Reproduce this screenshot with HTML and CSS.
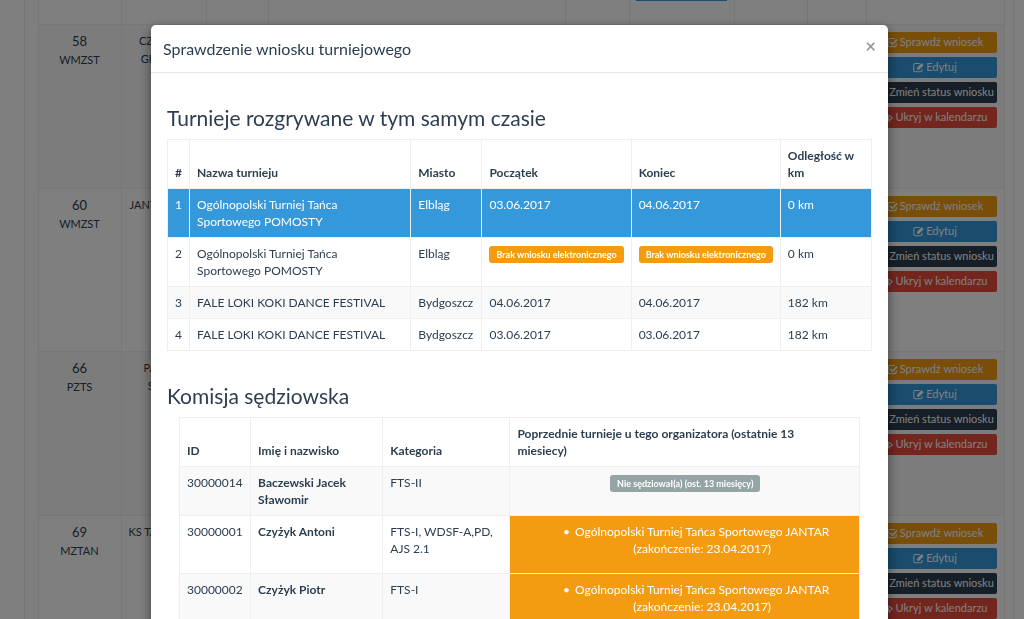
FILE: index.html
```html
<!DOCTYPE html>
<html lang="pl">
<head>
<meta charset="utf-8">
<title>Sprawdzenie wniosku turniejowego</title>
<link rel="stylesheet" href="styles.css">
</head>
<body>
<svg class="sprite" aria-hidden="true">
  <symbol id="check" viewBox="0 0 14 14"><path d="M10 2H3.2A1.7 1.7 0 0 0 1.500 3.700V10.500A1.700 1.700 0 0 0 3.200 12.200H10A1.700 1.700 0 0 0 11.700 10.500V8" fill="none" stroke="currentColor" stroke-width="1.400"/><path d="M4 6.200L7 9.200L12.800 3.200" fill="none" stroke="currentColor" stroke-width="2.200"/></symbol>
  <symbol id="edit" viewBox="0 0 14 14"><path d="M8.500 2H3A2 2 0 0 0 1 4V10.500A2 2 0 0 0 3 12.500H9.500A2 2 0 0 0 11.500 10.500V9" fill="none" stroke="currentColor" stroke-width="1.300"/><path d="M5.200 9.800V7.200L11 1.400L13.600 4L7.800 9.800Z" fill="currentColor"/></symbol>
  <symbol id="cog" viewBox="0 0 14 14"><circle cx="7" cy="7" r="4" fill="none" stroke="currentColor" stroke-width="2.500"/></symbol>
  <symbol id="hide" viewBox="0 0 14 14"><path d="M0.800 7.500Q7 0 13.200 7.500Q7 14 0.800 7.500Z" fill="none" stroke="currentColor" stroke-width="1.300"/><circle cx="7" cy="7" r="2.200" fill="currentColor"/><path d="M4 2L10 12.500" stroke="currentColor" stroke-width="1.300"/></symbol>
</svg>

<main class="panel">
  <table class="requests">
    <colgroup><col class="q-id"><col class="q-club"><col class="q-a"><col class="q-b"><col class="q-c"><col class="q-d"><col class="q-e"><col class="q-f"><col class="q-actions"></colgroup>
    <tbody>
      <tr class="previous"><td></td><td></td><td></td><td></td><td></td><td class="status"><span class="status-bar"></span></td><td></td><td></td><td></td></tr>
      <tr>
        <td><span class="number">58</span><br>WMZST</td><td>CZAPLE T<br>GRANDE</td><td></td><td></td><td></td><td></td><td></td><td></td>
        <td><div class="actions">
          <button class="btn warning"><svg><use href="#check"/></svg>Sprawdź wniosek</button>
          <button class="btn info"><svg><use href="#edit"/></svg>Edytuj</button>
          <button class="btn dark"><svg><use href="#cog"/></svg>Zmień status wniosku</button>
          <button class="btn danger"><svg><use href="#hide"/></svg>Ukryj w kalendarzu</button>
        </div></td>
      </tr>
      <tr>
        <td><span class="number">60</span><br>WMZST</td><td>JANTAR ELBL</td><td></td><td></td><td></td><td></td><td></td><td></td>
        <td><div class="actions">
          <button class="btn warning"><svg><use href="#check"/></svg>Sprawdź wniosek</button>
          <button class="btn info"><svg><use href="#edit"/></svg>Edytuj</button>
          <button class="btn dark"><svg><use href="#cog"/></svg>Zmień status wniosku</button>
          <button class="btn danger"><svg><use href="#hide"/></svg>Ukryj w kalendarzu</button>
        </div></td>
      </tr>
      <tr>
        <td><span class="number">66</span><br>PZTS</td><td>PASJA T<br>STEPS</td><td></td><td></td><td></td><td></td><td></td><td></td>
        <td><div class="actions">
          <button class="btn warning"><svg><use href="#check"/></svg>Sprawdź wniosek</button>
          <button class="btn info"><svg><use href="#edit"/></svg>Edytuj</button>
          <button class="btn dark"><svg><use href="#cog"/></svg>Zmień status wniosku</button>
          <button class="btn danger"><svg><use href="#hide"/></svg>Ukryj w kalendarzu</button>
        </div></td>
      </tr>
      <tr>
        <td><span class="number">69</span><br>MZTAN</td><td>KS TANIEC TK</td><td></td><td></td><td></td><td></td><td></td><td></td>
        <td><div class="actions">
          <button class="btn warning"><svg><use href="#check"/></svg>Sprawdź wniosek</button>
          <button class="btn info"><svg><use href="#edit"/></svg>Edytuj</button>
          <button class="btn dark"><svg><use href="#cog"/></svg>Zmień status wniosku</button>
          <button class="btn danger"><svg><use href="#hide"/></svg>Ukryj w kalendarzu</button>
        </div></td>
      </tr>
    </tbody>
  </table>
</main>

<div class="backdrop">
  <section class="modal" role="dialog" aria-labelledby="dialog-title">
    <header class="modal-header">
      <h1 id="dialog-title">Sprawdzenie wniosku turniejowego</h1>
      <button class="close" aria-label="Zamknij">×</button>
    </header>
    <div class="modal-body">
      <h2>Turnieje rozgrywane w tym samym czasie</h2>
      <table class="grid">
        <colgroup><col class="t-no"><col class="t-name"><col class="t-city"><col class="t-date"><col class="t-date"><col class="t-km"></colgroup>
        <thead><tr><th>#</th><th>Nazwa turnieju</th><th>Miasto</th><th>Początek</th><th>Koniec</th><th>Odległość w km</th></tr></thead>
        <tbody>
          <tr class="current"><td>1</td><td>Ogólnopolski Turniej Tańca<br>Sportowego POMOSTY</td><td>Elbląg</td><td>03.06.2017</td><td>04.06.2017</td><td>0 km</td></tr>
          <tr><td>2</td><td>Ogólnopolski Turniej Tańca<br>Sportowego POMOSTY</td><td>Elbląg</td><td><span class="label warning">Brak wniosku elektronicznego</span></td><td><span class="label warning">Brak wniosku elektronicznego</span></td><td>0 km</td></tr>
          <tr><td>3</td><td>FALE LOKI KOKI DANCE FESTIVAL</td><td>Bydgoszcz</td><td>04.06.2017</td><td>04.06.2017</td><td>182 km</td></tr>
          <tr><td>4</td><td>FALE LOKI KOKI DANCE FESTIVAL</td><td>Bydgoszcz</td><td>03.06.2017</td><td>03.06.2017</td><td>182 km</td></tr>
        </tbody>
      </table>

      <h2>Komisja sędziowska</h2>
      <div class="inset">
        <table class="grid">
          <colgroup><col class="j-id"><col class="j-name"><col class="j-cat"><col class="j-prev"></colgroup>
          <thead><tr><th>ID</th><th>Imię i nazwisko</th><th>Kategoria</th><th>Poprzednie turnieje u tego organizatora (ostatnie 13<br>miesiecy)</th></tr></thead>
          <tbody>
            <tr><td>30000014</td><td><strong>Baczewski Jacek<br>Sławomir</strong></td><td>FTS-II</td><td class="center"><span class="label muted">Nie sędziował(a) (ost. 13 miesięcy)</span></td></tr>
            <tr><td>30000001</td><td><strong>Czyżyk Antoni</strong></td><td>FTS-I, WDSF-A,PD,<br>AJS 2.1</td><td class="center warning"><ul><li><span>Ogólnopolski Turniej Tańca Sportowego JANTAR<br>(zakończenie: 23.04.2017)</span></li></ul></td></tr>
            <tr><td>30000002</td><td><strong>Czyżyk Piotr</strong></td><td>FTS-I</td><td class="center warning"><ul><li><span>Ogólnopolski Turniej Tańca Sportowego JANTAR<br>(zakończenie: 23.04.2017)</span></li></ul></td></tr>
          </tbody>
        </table>
      </div>
    </div>
  </section>
</div>
</body>
</html>
```
FILE: styles.css
```css
* { box-sizing: border-box; }
body {
  margin: 0;
  height: 100vh;
  overflow: hidden;
  background: #fff;
  color: #2c3e50;
  font: 12px/18px Lato, "Open Sans", sans-serif;
}
.sprite { display: none; }
table { width: 100%; border-collapse: collapse; table-layout: fixed; }

.panel {
  height: 100%;
  overflow: hidden;
  margin: 0 10px 0 24px;
  padding: 0 10px 0 13px;
  border: solid #ecf0f1;
  border-width: 0 1px;
}
.requests td {
  height: 163px;
  padding: 7px 7px 0 6px;
  border: 1px solid #ecf0f1;
  font-size: 11px;
  text-align: center;
  vertical-align: top;
}
.number { font-size: 13px; }
.requests tr:nth-child(even) { background: #f9f9f9; }
.requests tr:nth-child(even) td { height: 164px; }
.requests tr.previous td { height: 24px; padding-top: 0; border-top: 0; }
.status-bar { display: block; height: 1px; background: #3498db; }
.q-id { width: 83px; }
.q-club { width: 85px; }
.q-a { width: 62px; }
.q-b { width: 297px; }
.q-c { width: 64px; }
.q-d { width: 105px; }
.q-e { width: 73px; }
.q-f { width: 59px; }
.q-actions { width: 138px; }

.actions { display: grid; gap: 4px; }
.btn {
  display: flex;
  align-items: center;
  justify-content: center;
  gap: 2px;
  height: 21px;
  padding: 0;
  border: 0;
  border-radius: 2px;
  color: #fff;
  font: 11px/18px Lato, sans-serif;
  white-space: nowrap;
}
.btn svg { width: 11px; height: 11px; flex: none; }
.warning { background: #f39c12; color: #fff; }
.info { background: #3498db; }
.dark { background: #2c3e50; }
.danger { background: #e74c3c; }
.muted { background: #95a5a6; }

.backdrop {
  position: fixed;
  inset: 0;
  overflow: hidden;
  padding: 25px 0 0 15px;
  background: rgba(0, 0, 0, 0.5);
}
.modal {
  max-width: 737px;
  margin: 0 auto;
  background: #fff;
  border-radius: 5px;
  box-shadow: 0 4px 12px rgba(0, 0, 0, 0.5);
}
.modal-header {
  display: flex;
  align-items: center;
  justify-content: space-between;
  padding: 12px;
  border-bottom: 1px solid #e5e5e5;
}
h1 { margin: 0; font-size: 16px; line-height: 23px; font-weight: 400; }
.close {
  align-self: flex-start;
  padding: 0;
  border: 0;
  background: none;
  color: #999;
  font: 700 18px/18px Lato, sans-serif;
}
.modal-body { padding: 33px 16px; }
h2 { margin: 0 0 9px; font-size: 21px; line-height: 24px; font-weight: 400; }
.grid + h2 { margin-top: 33px; }
.inset { padding: 0 12px; }

.grid { line-height: 17px; }
.grid th, .grid td {
  padding: 7px 6px 7px 7px;
  border: 1px solid #ecf0f1;
  text-align: left;
  vertical-align: top;
}
.grid th { vertical-align: bottom; }
.grid tbody tr:nth-child(odd) { background: #f9f9f9; }
.grid tbody tr.current { background: #3498db; color: #fff; }
.grid .center { text-align: center; }
.t-no { width: 22px; }
.t-name { width: 221px; }
.t-city { width: 71px; }
.t-date { width: 149px; }
.t-km { width: 91px; }
.j-id { width: 71px; }
.j-name { width: 132px; }
.j-cat { width: 127px; }
.j-prev { width: 349px; }
.label {
  display: inline-block;
  padding: 0 7px;
  border-radius: 3px;
  color: #fff;
  font-size: 9px;
  font-weight: 700;
  white-space: nowrap;
}
ul { margin: 0 0 9px; padding-left: 22px; list-style: none; }
li { display: flex; justify-content: center; gap: 5px; }
li::before { content: "•"; }
```
